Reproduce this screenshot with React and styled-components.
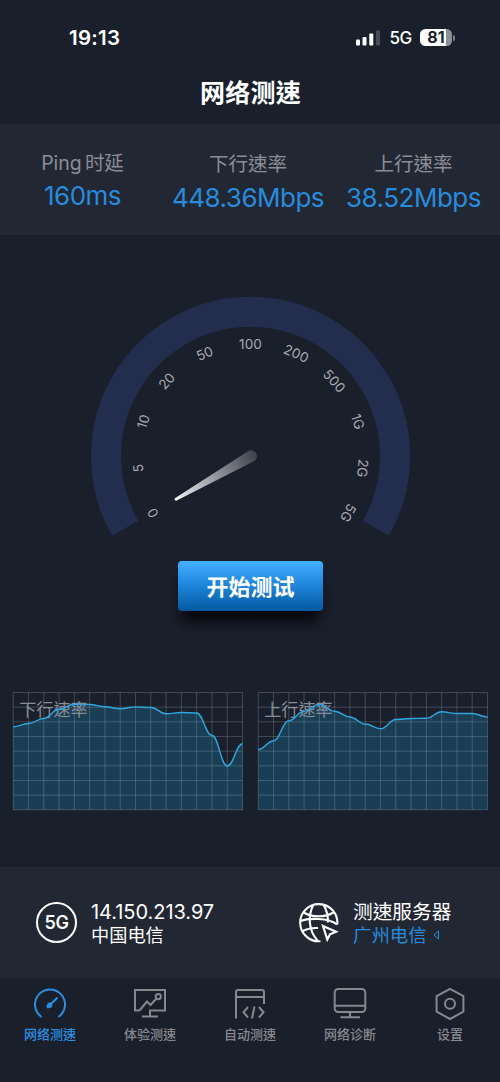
import React from 'react';
import styled, { createGlobalStyle } from 'styled-components';

const GlobalStyle = createGlobalStyle`
  * { box-sizing: border-box; }
  body {
    margin: 0;
    background: #1a1f2c;
    font-family: Inter, 'Noto Sans CJK TC', 'Noto Sans CJK SC', sans-serif;
    color: #fff;
  }
`;

const Screen = styled.div`
  width: 500px;
  height: 1082px;
  display: flex;
  flex-direction: column;
  overflow: hidden;
  background: #1a1f2c;
`;

const StatusBar = styled.div`
  height: 60px;
  padding: 15px 45px 0 69px;
  display: flex;
  align-items: center;
  justify-content: space-between;
`;

const Clock = styled.div`
  font-size: 20.5px;
  font-weight: 600;
  line-height: 24px;
  letter-spacing: 0.25px;
`;

const StatusIcons = styled.div`
  display: flex;
  align-items: center;
`;

const Network = styled.span`
  margin: 0 8px 0 8px;
  font-size: 17px;
  font-weight: 500;
  line-height: 20px;
  letter-spacing: -0.3px;
`;

const Battery = styled.div`
  width: 32px;
  height: 17px;
  margin-top: -1px;
  border-radius: 5.5px;
  background: linear-gradient(90deg, #fff 81%, #8d8f96 81%);
  color: #1a1f2c;
  font-size: 16px;
  font-weight: 700;
  line-height: 17px;
  text-align: center;
`;

const BatteryTip = styled.div`
  width: 2px;
  height: 6px;
  margin-left: 1px;
  border-radius: 0 2px 2px 0;
  background: #7b7e86;
`;

const Title = styled.h1`
  height: 64px;
  margin: 0;
  padding-left: 1px;
  font-size: 25px;
  font-weight: 700;
  line-height: 66px;
  letter-spacing: 0.3px;
  text-align: center;
`;

const Stats = styled.section`
  height: 111px;
  padding: 25px 4px 0 0;
  display: grid;
  grid-template-columns: 165px 166px 1fr;
  background: #222734;
`;

const Stat = styled.div`
  display: flex;
  flex-direction: column;
  align-items: center;
  white-space: nowrap;
  padding-top: ${(p) => p.$drop || 0}px;
`;

const StatLabel = styled.span`
  font-size: 19.5px;
  font-weight: 400;
  line-height: 28px;
  letter-spacing: ${(p) => p.$spacing || 0}px;
  word-spacing: ${(p) => (p.$spacing ? -2 : 0)}px;
  color: #8b8d96;
`;

const StatValue = styled.span`
  margin-top: ${(p) => (p.$raise ? 3 : 4)}px;
  font-size: 26px;
  font-weight: 400;
  line-height: 32px;
  letter-spacing: -0.5px;
  color: #288bdc;
`;

const GaugeArea = styled.section`
  height: 326px;
  padding-top: 50px;
  display: flex;
  justify-content: center;
`;

const ButtonRow = styled.div`
  height: 131px;
  display: flex;
  justify-content: center;
  align-items: flex-start;
`;

const StartButton = styled.button`
  width: 145px;
  height: 50px;
  margin-left: 1px;
  padding: 2px 0 0;
  border: 0;
  border-radius: 4px;
  background: linear-gradient(180deg, #43b1ff 0%, #2188de 45%, #03599f 100%);
  box-shadow: 0 14px 14px -4px #050609;
  color: #fff;
  font-family: inherit;
  font-size: 22px;
  font-weight: 700;
  line-height: 48px;
`;

const Charts = styled.section`
  height: 175px;
  padding: 0 12px;
  display: flex;
  justify-content: space-between;
`;

const Info = styled.section`
  height: 111px;
  padding: 0 0 0 36px;
  display: grid;
  grid-template-columns: 262px 1fr;
  background: #222734;
`;

const InfoItem = styled.div`
  display: flex;
  align-items: center;
`;

const CarrierBadge = styled.div`
  width: 41px;
  height: 41px;
  border: 2px solid #fff;
  border-radius: 50%;
  font-size: 18px;
  font-weight: 600;
  line-height: 37px;
  letter-spacing: -0.3px;
  text-align: center;
`;

const InfoText = styled.div`
  margin-left: 14px;
  padding-top: 2px;
  display: flex;
  flex-direction: column;
`;

const InfoLine = styled.div`
  display: flex;
  align-items: center;
  font-size: ${(p) => p.$size}px;
  line-height: 23px;
  font-weight: 400;
  letter-spacing: ${(p) => p.$spacing || 0}px;
  color: ${(p) => (p.$accent ? '#288bdc' : '#fff')};
  white-space: nowrap;
`;

const ArrowLeft = styled.svg`
  margin-left: 6px;
`;

const TabBar = styled.nav`
  flex: 1;
  padding-top: 7px;
  display: grid;
  grid-template-columns: repeat(5, 1fr);
  align-items: start;
  border-top: 1px solid #1e2330;
`;

const Tab = styled.div`
  display: flex;
  flex-direction: column;
  align-items: center;
  color: ${(p) => (p.$active ? '#2c8fe0' : '#86888e')};

  svg {
    fill: none;
    stroke: currentColor;
    stroke-width: 2;
  }
`;

const TabLabel = styled.span`
  margin-top: 3px;
  font-size: 13px;
  font-weight: 500;
  line-height: 20px;
`;

const marks = ['0', '5', '10', '20', '50', '100', '200', '500', '1G', '2G', '5G'];

function Gauge() {
  return (
    <svg width="340" height="260" viewBox="80 285 340 260">
      <defs>
        <linearGradient id="needle" gradientUnits="userSpaceOnUse" x1="176" y1="499" x2="255" y2="454">
          <stop offset="0" stopColor="#eeeff1" />
          <stop offset="0.5" stopColor="#94969d" />
          <stop offset="1" stopColor="#3f434e" />
        </linearGradient>
      </defs>
      <path
        d="M125.2 528.25 A144.5 144.5 0 1 1 375.8 528.25"
        fill="none"
        stroke="#232e4e"
        strokeWidth="30"
      />
      {marks.map((mark, i) => (
        <text
          key={mark}
          transform={`rotate(${-120 + i * 24} 250.5 456.5) translate(250.5 348.6)`}
          textAnchor="middle"
          fontSize="13.5"
          letterSpacing={mark.length === 3 ? 0.2 : 0}
          fill="#a8aab2"
        >
          {mark}
        </text>
      ))}
      <path
        d="M175.3 498 L247.6 451.4 A5.9 5.9 0 1 1 253.4 461.6 L176.8 500.4 A1.4 1.4 0 0 1 175.3 498 Z"
        fill="url(#needle)"
      />
    </svg>
  );
}

function curve(values, step) {
  return values.slice(1).reduce((d, y, i) => {
    const x0 = i * step;
    const x1 = x0 + step;
    const k = step * 0.42;
    return `${d} C${x0 + k} ${values[i]} ${x1 - k} ${y} ${x1} ${y}`;
  }, `M0 ${values[0]}`);
}

function Chart({ label, values }) {
  const step = 229.3 / 15;
  const line = curve(values, step);
  return (
    <svg width="231" height="119" viewBox="-1.2 -0.5 231 119">
      <path d={`${line} V117.3 H0 Z`} fill="#1b4e68" fillOpacity="0.68" />
      <text x="6" y="23.5" fontSize="17.1" fill="#868b95">{label}</text>
      <g stroke="#a5b4c4" strokeOpacity="0.28" strokeWidth="1">
        {Array.from({ length: 16 }, (_, i) => (
          <line key={`v${i}`} x1={i * step} x2={i * step} y1="0" y2="117.3" />
        ))}
        {Array.from({ length: 9 }, (_, i) => (
          <line key={`h${i}`} x1="0" x2="229.3" y1={i * 14.66} y2={i * 14.66} />
        ))}
      </g>
      <path d={line} fill="none" stroke="#2fa6df" strokeWidth="1.4" />
    </svg>
  );
}

const download = [34.2, 31, 26, 16.5, 11.7, 12, 14.3, 16.2, 14.4, 15, 21.3, 20, 20.5, 42.8, 73.5, 51.3];
const upload = [57, 48.5, 28.3, 18.7, 11.7, 18.8, 24.5, 31.5, 36.3, 27, 26, 25.7, 19.3, 21, 21, 24.5];

function Signal() {
  return (
    <svg width="25" height="16" viewBox="0 0 25 16">
      <rect x="0" y="9.5" width="4" height="6" rx="1" fill="#fff" />
      <rect x="6.5" y="7" width="4" height="8.5" rx="1" fill="#fff" />
      <rect x="13.3" y="3.5" width="4" height="12" rx="1" fill="#fff" />
      <rect x="20" y="0.5" width="4" height="15" rx="1" fill="#484c57" />
    </svg>
  );
}

function Globe() {
  return (
    <svg width="41" height="41" viewBox="0 0 41 41" fill="none" stroke="#fff" strokeWidth="2.1">
      <path d="M39.3 22.5 A18.6 18.6 0 1 0 22.5 39.2" />
      <path d="M15.5 2.6 C10 13 10 28 19.5 38.5 M25.5 2.6 C29 8.5 30.2 14 29.8 20.5" />
      <path d="M5.5 10.5 C14 15.5 27 15.5 35.5 10.5" />
      <path d="M2.2 19 C11 15.8 30 15.8 39 22.3 M4 29.5 C9 26.5 14 25.7 20 26" />
      <path d="M25 24 L38 29.8 L32 32.3 L29.3 37.5 Z" strokeWidth="2.2" />
    </svg>
  );
}

const tabs = [
  {
    label: '网络测速',
    active: true,
    icon: (
      <>
        <path d="M8 30.5 A15 15 0 1 1 26 30.5" strokeLinecap="round" />
        <path d="M17 19 L24.5 11.5" />
        <circle cx="16.7" cy="19.2" r="2.6" fill="currentColor" stroke="none" />
        <path d="M14 21.5 L18 18" strokeWidth="3" />
      </>
    ),
  },
  {
    label: '体验测速',
    icon: (
      <>
        <path d="M6.5 24.5 H2 V4 H32 V24.5 H17 V30.5 M9 30.5 H25" />
        <path d="M6.5 24.5 L14 15.5 L17.5 19 L23 13" />
        <circle cx="25.3" cy="10.6" r="2.6" />
      </>
    ),
  },
  {
    label: '自动测速',
    icon: (
      <>
        <path d="M3 32.5 V6 Q3 4 5 4 H29 Q31 4 31 6 V18 M3 11 H31" />
        <path d="M15 21 L10.5 26.3 L15 31.5 M26 21 L30.5 26.3 L26 31.5 M21.5 20.5 L19 32.5" />
      </>
    ),
  },
  {
    label: '网络诊断',
    icon: (
      <>
        <rect x="1.7" y="3" width="30.6" height="23" rx="3.5" />
        <path d="M2 19.8 H32 M17 26 V31.3 M7.5 31.3 H27" />
      </>
    ),
  },
  {
    label: '设置',
    icon: (
      <>
        <path d="M17 2.8 L30.4 10.2 V25.6 L17 33 L3.6 25.6 V10.2 Z" />
        <circle cx="17" cy="17.8" r="5" />
      </>
    ),
  },
];

export default function App() {
  return (
    <Screen>
      <GlobalStyle />
      <StatusBar>
        <Clock>19:13</Clock>
        <StatusIcons>
          <Signal />
          <Network>5G</Network>
          <Battery>81</Battery>
          <BatteryTip />
        </StatusIcons>
      </StatusBar>
      <Title>网络测速</Title>
      <Stats>
        <Stat>
          <StatLabel $spacing={-0.1}>Ping 时延</StatLabel>
          <StatValue $raise>160ms</StatValue>
        </Stat>
        <Stat $drop={1}>
          <StatLabel>下行速率</StatLabel>
          <StatValue>448.36Mbps</StatValue>
        </Stat>
        <Stat $drop={1}>
          <StatLabel>上行速率</StatLabel>
          <StatValue>38.52Mbps</StatValue>
        </Stat>
      </Stats>
      <GaugeArea>
        <Gauge />
      </GaugeArea>
      <ButtonRow>
        <StartButton>开始测试</StartButton>
      </ButtonRow>
      <Charts>
        <Chart label="下行速率" values={download} />
        <Chart label="上行速率" values={upload} />
      </Charts>
      <Info>
        <InfoItem>
          <CarrierBadge>5G</CarrierBadge>
          <InfoText>
            <InfoLine $size={20} $spacing={-0.05}>14.150.213.97</InfoLine>
            <InfoLine $size={18.2}>中国电信</InfoLine>
          </InfoText>
        </InfoItem>
        <InfoItem>
          <Globe />
          <InfoText>
            <InfoLine $size={19.7}>测速服务器</InfoLine>
            <InfoLine $size={18.4} $accent>
              广州电信
              <ArrowLeft width="7" height="10" viewBox="0 0 7 10">
                <path d="M5.5 1 V9 L1 5 Z" fill="none" stroke="currentColor" />
              </ArrowLeft>
            </InfoLine>
          </InfoText>
        </InfoItem>
      </Info>
      <TabBar>
        {tabs.map((tab) => (
          <Tab key={tab.label} $active={tab.active}>
            <svg width="34" height="35" viewBox="0 0 34 35">{tab.icon}</svg>
            <TabLabel>{tab.label}</TabLabel>
          </Tab>
        ))}
      </TabBar>
    </Screen>
  );
}
